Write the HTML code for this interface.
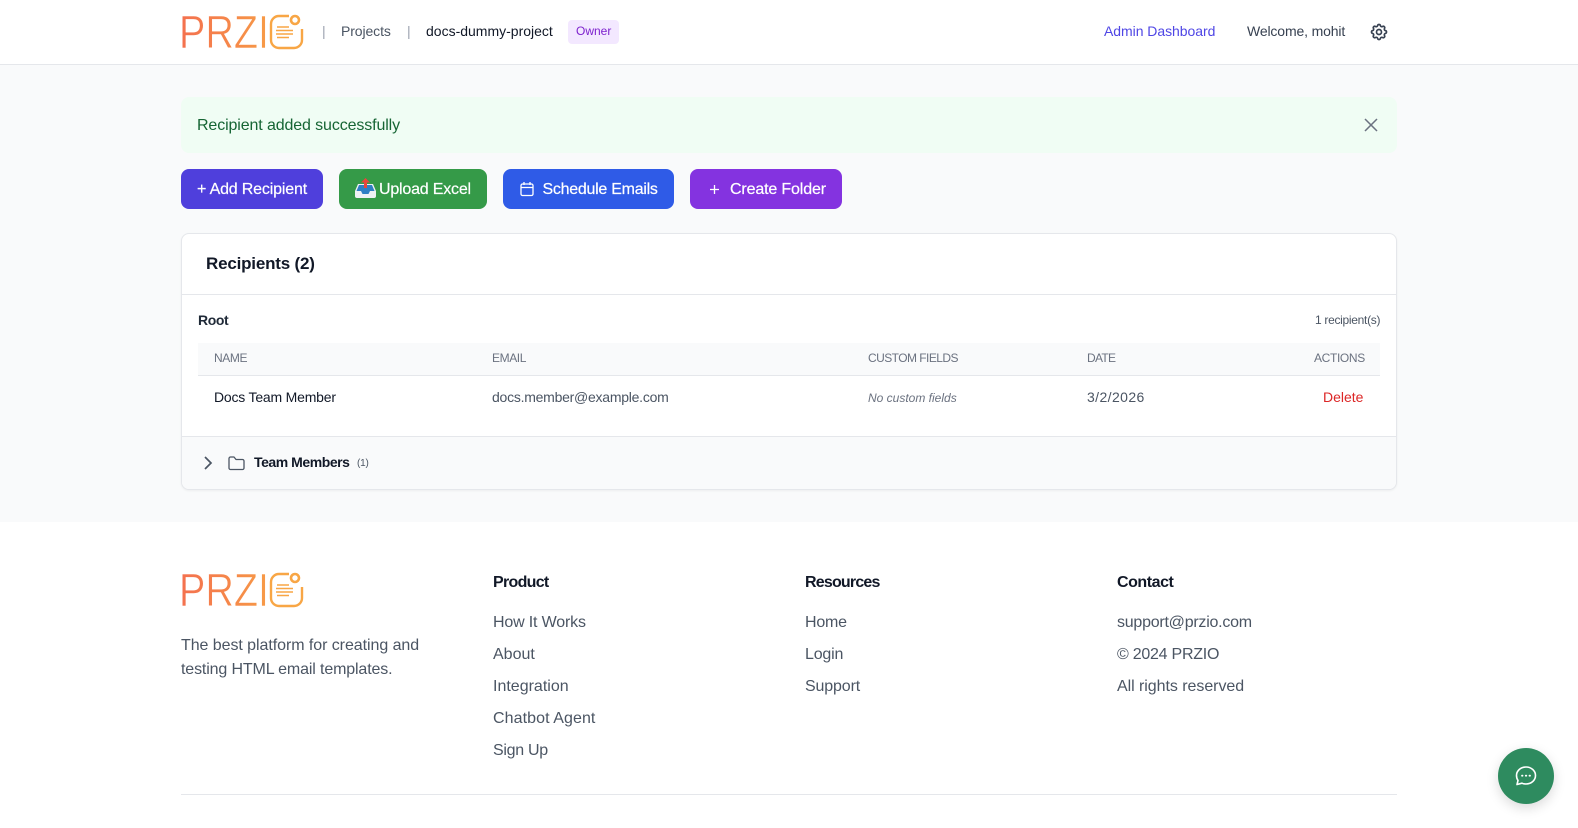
<!DOCTYPE html>
<html lang="en"><head><meta charset="utf-8"><title>PRZIO - docs-dummy-project</title>
<style>
html,body{margin:0;padding:0}
body{width:1578px;height:828px;overflow:hidden;position:relative;background:#f9fafb;font-family:"Liberation Sans",Arial,sans-serif;color:#374151}
.a{position:absolute}
.t{position:absolute;white-space:nowrap;line-height:20px;height:20px}
a{text-decoration:none;color:inherit}
.btn{position:absolute;top:169px;height:40px;border-radius:8px}
.btn .t{top:10.500px;color:#fff;font-size:16px;font-weight:400;-webkit-text-stroke:.2px #fff}
.h{font-size:12px;color:#6b7280;top:348px}
.f{font-size:16px;color:#4b5563}
.fh{font-size:16px;font-weight:700;color:#111827;top:573px}
</style></head><body>
<header class="a" style="left:0;top:0;width:1578px;height:64px;background:#fff;border-bottom:1px solid #e5e7eb"></header>
<svg class="a" style="left:179px;top:9px;overflow:visible" width="126" height="44" viewBox="0 0 126 44">
<defs><linearGradient id="g2" gradientUnits="userSpaceOnUse" x1="0" x2="122" y1="0" y2="0"><stop offset="0" stop-color="#f4704f"/><stop offset=".55" stop-color="#f68f48"/><stop offset="1" stop-color="#f9ae45"/></linearGradient></defs>
<text x="0" y="39" font-family="Liberation Sans" font-size="46" fill="url(#g2)" stroke="#fff" stroke-width=".6" textLength="90" lengthAdjust="spacingAndGlyphs">PRZI</text>
<path d="M110 7H100a8 8 0 0 0-8 8v16a8 8 0 0 0 8 8h15a8 8 0 0 0 8-8V20" fill="none" stroke="#f8a645" stroke-width="2.400"/>
<circle cx="116" cy="11" r="4" fill="none" stroke="#f8a645" stroke-width="2.600"/>
<path d="M98 18h12M97 21.500h17M97 25h17M98 28.500h12" stroke="#f8a645" stroke-width="1.500"/>
</svg>
<span class="t" style="left:322px;top:21px;font-size:14px;color:#9ca3af">|</span>
<a class="t" style="left:341px;top:21px;font-size:14px;color:#4b5563;letter-spacing:-.1px">Projects</a>
<span class="t" style="left:407px;top:21px;font-size:14px;color:#9ca3af">|</span>
<span class="t" style="left:426px;top:21px;font-size:14px;color:#111827">docs-dummy-project</span>
<span class="a" style="left:568px;top:20px;width:51px;height:24px;border-radius:4px;background:#f3e8ff"></span>
<span class="t" style="left:576px;top:21px;font-size:12px;color:#7e22ce;">Owner</span>
<a class="t" style="left:1104px;top:21px;font-size:14px;color:#4f46e5;letter-spacing:-.05px">Admin Dashboard</a>
<span class="t" style="left:1247px;top:21px;font-size:14px;color:#374151;letter-spacing:-.14px">Welcome, mohit</span>
<svg class="a" style="left:1369px;top:22px" width="20" height="20" viewBox="0 0 24 24" fill="none" stroke="#374151" stroke-width="2" stroke-linecap="round" stroke-linejoin="round"><path d="M10.325 4.317c.426-1.756 2.924-1.756 3.35 0a1.724 1.724 0 002.573 1.066c1.543-.94 3.31.826 2.37 2.37a1.724 1.724 0 001.065 2.572c1.756.426 1.756 2.924 0 3.35a1.724 1.724 0 00-1.066 2.573c.94 1.543-.826 3.31-2.37 2.37a1.724 1.724 0 00-2.572 1.065c-.426 1.756-2.924 1.756-3.35 0a1.724 1.724 0 00-2.573-1.066c-1.543.94-3.31-.826-2.37-2.37a1.724 1.724 0 00-1.065-2.572c-1.756-.426-1.756-2.924 0-3.35a1.724 1.724 0 001.066-2.573c-.94-1.543.826-3.31 2.37-2.37.996.608 2.296.07 2.572-1.065z"/><path d="M15 12a3 3 0 11-6 0 3 3 0 016 0z"/></svg>

<div class="a" style="left:181px;top:97px;width:1216px;height:56px;border-radius:8px;background:#f0fdf4"></div>
<span class="t" style="left:197px;top:116px;font-size:16px;color:#166534;letter-spacing:-.12px">Recipient added successfully</span>
<svg class="a" style="left:1361px;top:115px" width="20" height="20" viewBox="0 0 20 20" stroke="#6b7280" stroke-width="1.500" fill="none"><path d="M4 4l12 12M16 4L4 16"/></svg>

<div class="btn" style="left:181px;width:142px;background:#4f3fdc"><span class="t" style="left:16px;letter-spacing:-.17px">+ Add Recipient</span></div>
<div class="btn" style="left:339px;width:148px;background:#359a48">
<svg class="a" style="left:16px;top:9px" width="21" height="21" viewBox="0 0 21 21"><path d="M3 6h15l3 7v5a2 2 0 0 1-2 2H2a2 2 0 0 1-2-2v-5z" fill="#eef1f4"/><path d="M4 7h13l2.500 6H15l-1.500 3h-6L6 13H1.500z" fill="#2f7fc4"/><path d="M10.500 0l4.500 4.500h-3V10H9V4.500H6z" fill="#e8453c"/></svg>
<span class="t" style="left:40px;letter-spacing:-.2px">Upload Excel</span></div>
<div class="btn" style="left:503px;width:171px;background:#2f5be7">
<svg class="a" style="left:16px;top:12px" width="16" height="16" viewBox="0 0 16 16" fill="none" stroke="#fff" stroke-width="1.300"><rect x="2" y="3" width="12" height="11.500" rx="1.500"/><path d="M5 1v3M11 1v3M2 6.500h12"/></svg>
<span class="t" style="left:39.500px;letter-spacing:-.27px">Schedule Emails</span></div>
<div class="btn" style="left:690px;width:152px;background:#8433e0">
<svg class="a" style="left:18px;top:14px" width="13" height="13" viewBox="0 0 13 13" stroke="#fff" stroke-width="1.300"><path d="M6.500 2v9M2 6.500h9"/></svg>
<span class="t" style="left:40px;letter-spacing:-.15px">Create Folder</span></div>

<section class="a" style="left:181px;top:233px;width:1214px;height:255px;background:#fff;border:1px solid #e5e7eb;border-radius:8px;box-shadow:0 1px 2px rgba(0,0,0,.05);overflow:hidden">
<div class="a" style="left:0;top:60px;width:1214px;height:1px;background:#e5e7eb"></div>
<div class="a" style="left:16px;top:109px;width:1182px;height:32px;background:#f9fafb;border-bottom:1px solid #e5e7eb"></div>
<div class="a" style="left:0;top:202px;width:1214px;height:53px;background:#f9fafb;border-top:1px solid #e5e7eb;box-sizing:border-box"></div>
</section>
<h2 class="t" style="margin:0;left:206px;top:254px;font-size:17px;font-weight:700;color:#111827;letter-spacing:-.2px">Recipients (2)</h2>
<span class="t" style="left:198px;top:310px;font-size:14px;font-weight:700;color:#1f2937;letter-spacing:-.4px">Root</span>
<span class="t" style="left:1315px;top:310px;font-size:12px;color:#4b5563;letter-spacing:-.3px">1 recipient(s)</span>
<span class="t h" style="left:214px;letter-spacing:-.4px">NAME</span>
<span class="t h" style="left:492px;letter-spacing:-.4px">EMAIL</span>
<span class="t h" style="left:868px;letter-spacing:-.55px">CUSTOM FIELDS</span>
<span class="t h" style="left:1087px;letter-spacing:-.7px">DATE</span>
<span class="t h" style="left:1314px;letter-spacing:-.35px">ACTIONS</span>
<span class="t" style="left:214px;top:387px;font-size:14px;color:#111827;letter-spacing:-.2px">Docs Team Member</span>
<span class="t" style="left:492px;top:387px;font-size:14px;color:#4b5563;letter-spacing:-.25px">docs.member@example.com</span>
<span class="t" style="left:868px;top:388px;font-size:12px;font-style:italic;color:#6b7280">No custom fields</span>
<span class="t" style="left:1087px;top:387px;font-size:14px;color:#4b5563;letter-spacing:.4px">3/2/2026</span>
<span class="t" style="left:1323px;top:387px;font-size:14px;color:#dc2626">Delete</span>
<svg class="a" style="left:198px;top:453px" width="20" height="20" viewBox="0 0 20 20" fill="none" stroke="#4b5563" stroke-width="1.700"><path d="M7 4l6 6-6 6"/></svg>
<svg class="a" style="left:227px;top:454px" width="19" height="18" viewBox="0 0 19 18" fill="none" stroke="#4b5563" stroke-width="1.300" stroke-linejoin="round"><path d="M2 4.500a1.500 1.500 0 0 1 1.500-1.500H7l2 2.500h6.500A1.500 1.500 0 0 1 17 7v7a1.500 1.500 0 0 1-1.500 1.500h-12A1.500 1.500 0 0 1 2 14z"/></svg>
<span class="t" style="left:254px;top:452px;font-size:14px;font-weight:700;color:#111827;letter-spacing:-.45px">Team Members</span>
<span class="t" style="left:357px;top:454px;font-size:10px;color:#4b5563;letter-spacing:-.2px">(1)</span>

<footer class="a" style="left:0;top:522px;width:1578px;height:306px;background:#fff"></footer>
<svg class="a" style="left:179px;top:567px;overflow:visible" width="126" height="44" viewBox="0 0 126 44">
<text x="0" y="39" font-family="Liberation Sans" font-size="46" fill="url(#g2)" stroke="#fff" stroke-width=".6" textLength="90" lengthAdjust="spacingAndGlyphs">PRZI</text>
<path d="M110 7H100a8 8 0 0 0-8 8v16a8 8 0 0 0 8 8h15a8 8 0 0 0 8-8V20" fill="none" stroke="#f8a645" stroke-width="2.400"/>
<circle cx="116" cy="11" r="4" fill="none" stroke="#f8a645" stroke-width="2.600"/>
<path d="M98 18h12M97 21.500h17M97 25h17M98 28.500h12" stroke="#f8a645" stroke-width="1.500"/>
</svg>
<p class="t f" style="margin:0;left:181px;top:636px;letter-spacing:-.06px">The best platform for creating and</p>
<p class="t f" style="margin:0;left:181px;top:660px;letter-spacing:-.14px">testing HTML email templates.</p>
<span class="t fh" style="left:493px;letter-spacing:-.7px">Product</span>
<a class="t f" style="left:493px;top:613px;letter-spacing:-.17px">How It Works</a>
<a class="t f" style="left:493px;top:645px">About</a>
<a class="t f" style="left:493px;top:677px">Integration</a>
<a class="t f" style="left:493px;top:709px;letter-spacing:.08px">Chatbot Agent</a>
<a class="t f" style="left:493px;top:741px;letter-spacing:-.3px">Sign Up</a>
<span class="t fh" style="left:805px;letter-spacing:-.8px">Resources</span>
<a class="t f" style="left:805px;top:613px;letter-spacing:-.2px">Home</a>
<a class="t f" style="left:805px;top:645px;letter-spacing:-.2px">Login</a>
<a class="t f" style="left:805px;top:677px;letter-spacing:-.14px">Support</a>
<span class="t fh" style="left:1117px;letter-spacing:-.45px">Contact</span>
<a class="t f" style="left:1117px;top:613px;letter-spacing:-.24px">support@przio.com</a>
<span class="t f" style="left:1117px;top:645px;letter-spacing:-.25px">© 2024 PRZIO</span>
<span class="t f" style="left:1117px;top:677px;letter-spacing:-.05px">All rights reserved</span>
<div class="a" style="left:181px;top:794px;width:1216px;height:1px;background:#e5e7eb"></div>
<div class="a" style="left:1498px;top:748px;width:56px;height:56px;border-radius:50%;background:#2e8b5f;box-shadow:0 4px 12px rgba(0,0,0,.15)"></div>
<svg class="a" style="left:1514px;top:764px" width="24" height="24" viewBox="0 0 24 24" fill="none" stroke="#fff" stroke-width="1.600" stroke-linejoin="round"><path d="M12 3c5 0 9.500 3.500 9.500 8.500S17 20 12 20c-1.500 0-3-.3-4-.8L3 20.500l1-4C3 15 2.500 13.300 2.500 11.500 2.500 6.500 7 3 12 3z"/><path d="M8 11.700h.5M11.800 11.700h.5M15.500 11.700h.5" stroke-width="1.800" stroke-linecap="round"/></svg>
</body></html>
